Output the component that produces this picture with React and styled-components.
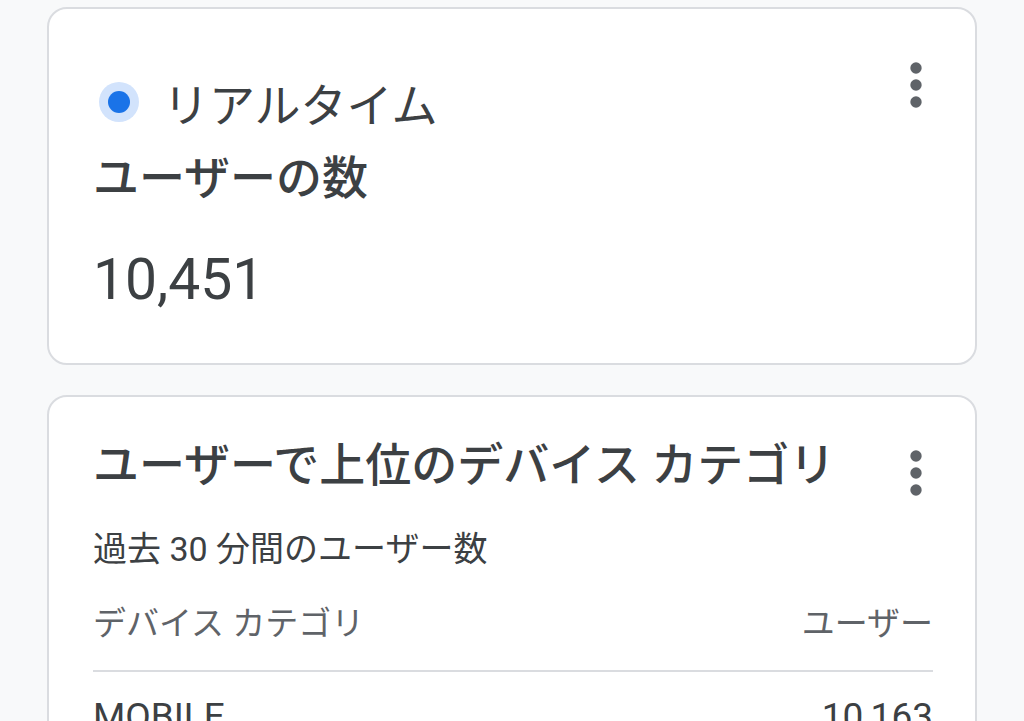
import React from 'react'
import styled, { createGlobalStyle } from 'styled-components'

const GlobalStyle = createGlobalStyle`
  body {
    margin: 0;
    background: #f8f9fa;
    font-family: Roboto, 'Noto Sans CJK JP', sans-serif;
    color: #3c4043;
  }
`

const rows = [
  { name: 'MOBILE', users: '10,163' },
  { name: 'DESKTOP', users: '262' },
  { name: 'TABLET', users: '26' },
]

const Kebab = () => (
  <MenuButton aria-label='menu'>
    <svg width='68' height='68' viewBox='0 0 24 24' fill='#5f6368'>
      <circle cx='12' cy='6' r='2' />
      <circle cx='12' cy='12' r='2' />
      <circle cx='12' cy='18' r='2' />
    </svg>
  </MenuButton>
)

const App = () => {
  return (
    <Page>
      <GlobalStyle />
      <Card>
        <Header>
          <div>
            <Live>
              <Dot />
              <span>リアルタイム</span>
            </Live>
            <Title>ユーザーの数</Title>
          </div>
          <Kebab />
        </Header>
        <Big>10,451</Big>
      </Card>

      <Card>
        <Header>
          <Title>ユーザーで上位のデバイス カテゴリ</Title>
          <Kebab />
        </Header>
        <Sub>過去 30 分間のユーザー数</Sub>
        <HeadRow>
          <span>デバイス カテゴリ</span>
          <span>ユーザー</span>
        </HeadRow>
        {rows.map((r) => (
          <Row key={r.name}>
            <span>{r.name}</span>
            <span>{r.users}</span>
          </Row>
        ))}
      </Card>
    </Page>
  )
}

const Page = styled.main`
  display: flex;
  flex-direction: column;
  gap: 30px;
  padding: 7px 47px 40px;
`

const Card = styled.section`
  background: #fff;
  border: 2px solid #dadce0;
  border-radius: 20px;
  padding: 40px 42px 49px 44px;
`

const Header = styled.div`
  display: flex;
  justify-content: space-between;
  align-items: flex-start;
`

const MenuButton = styled.button`
  flex: none;
  border: 0;
  padding: 0;
  background: none;
  display: flex;
  margin: 2px -17px 0 0;
`

const Live = styled.div`
  display: flex;
  align-items: center;
  height: 56px;
  margin-top: 25px;
  margin-bottom: 20px;
  font-size: 46px;
  font-weight: 400;
`

const Dot = styled.span`
  width: 22px;
  height: 22px;
  margin: 0 33px 0 15px;
  border-radius: 50%;
  background: #1a73e8;
  box-shadow: 0 0 0 9px #d2e3fc;
`

const Title = styled.h2`
  margin: 0;
  font-size: 46px;
  line-height: 56px;
  font-weight: 500;
  color: #3c4043;
`

const Big = styled.div`
  margin-top: 40px;
  font-size: 57px;
  line-height: 68px;
  color: #3c4043;
`

const Sub = styled.div`
  margin-top: 18px;
  font-size: 34px;
  line-height: 48px;
`

const HeadRow = styled.div`
  display: flex;
  justify-content: space-between;
  margin-top: 29px;
  padding-bottom: 24px;
  border-bottom: 2px solid #dadce0;
  font-size: 33px;
  line-height: 44px;
  color: #5f6368;
`

const Row = styled.div`
  display: flex;
  justify-content: space-between;
  padding: 21px 0 10px;
  font-size: 37px;
  line-height: 48px;
  color: #3c4043;
`

export default App
